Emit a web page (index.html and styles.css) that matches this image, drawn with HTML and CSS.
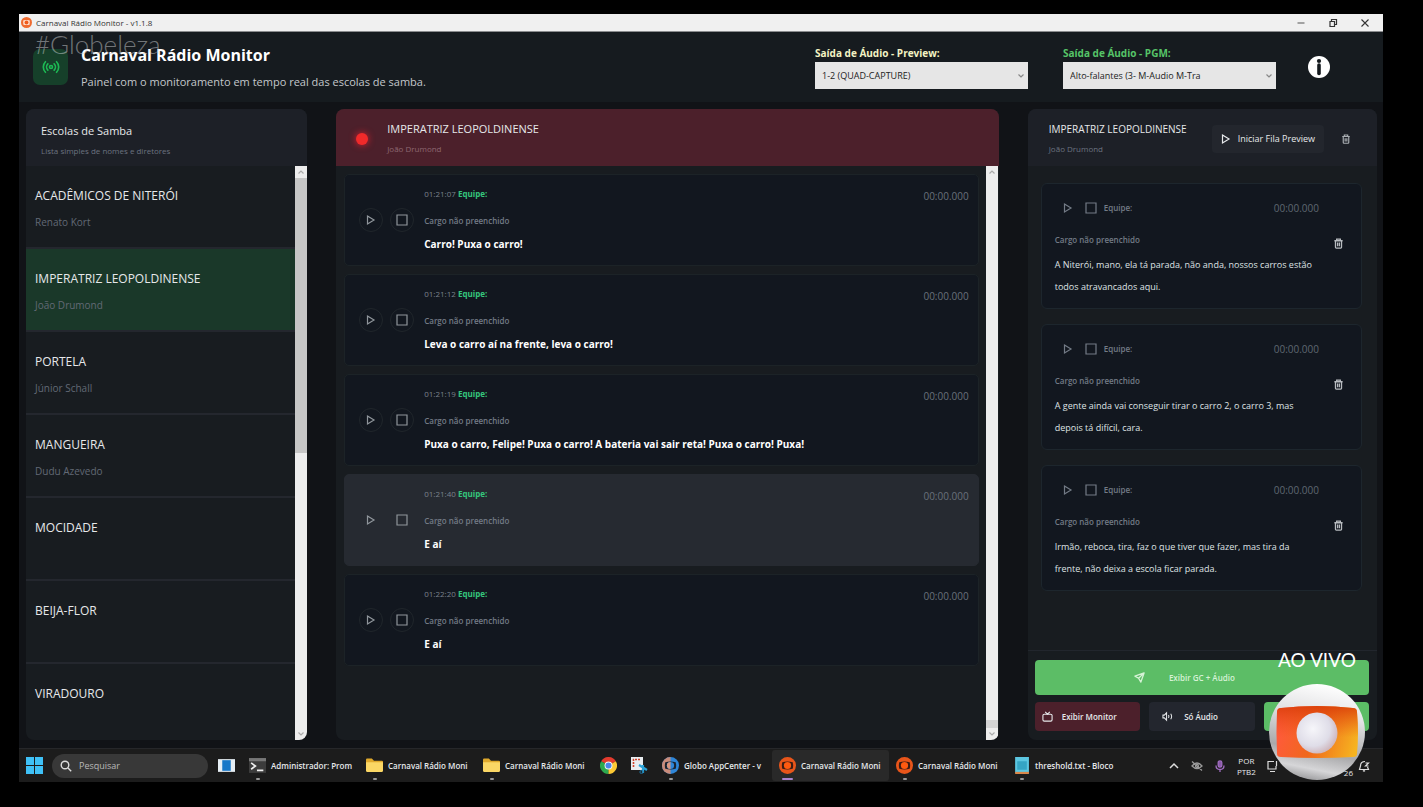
FILE: index.html
```html
<!DOCTYPE html>
<html lang="pt-BR">
<head>
<meta charset="utf-8">
<title>Carnaval Rádio Monitor - v1.1.8</title>
<link rel="stylesheet" href="styles.css">
</head>
<body>
<svg class="defs" aria-hidden="true">
  <defs>
    <symbol id="play" viewBox="0 0 12 12"><path d="M2.5 2 9 6 2.500 10Z" fill="none" stroke="currentColor" stroke-width="1.2"/></symbol>
    <symbol id="stop" viewBox="0 0 12 12"><path d="M1 1h10v10H1Z" fill="none" stroke="currentColor" stroke-width="1.2"/></symbol>
    <symbol id="trash" viewBox="0 0 12 12"><path d="M1.5 3h9M4 3V1.2h4V3M2.7 3v7.2q0 .9.9.9h4.8q.9 0 .9-.9V3M5 5v4M7 5v4" fill="none" stroke="currentColor" stroke-width="1.4"/></symbol>
    <symbol id="up" viewBox="0 0 8 8"><path d="M1.5 5.5 4 3l2.5 2.5" fill="none" stroke="currentColor" stroke-width="1.2"/></symbol>
    <symbol id="down" viewBox="0 0 8 8"><path d="M1.5 2.5 4 5l2.5-2.5" fill="none" stroke="currentColor" stroke-width="1.2"/></symbol>
    <symbol id="folder" viewBox="0 0 16 16"><path d="M0 2.5q0-1 1-1h4.5L7.500 3.500H15q1 0 1 1V7H0Z" fill="#e0a92c"/><path d="M0 5h16v8q0 1-1 1H1q-1 0-1-1Z" fill="#fbd765"/></symbol>
    <symbol id="globo" viewBox="0 0 18 18"><circle cx="9" cy="9" r="9" fill="#e8551a"/><path d="M3.500 5.500Q9 4 14.500 5.500 15.500 9 14.500 12.500 9 14 3.500 12.500 2.500 9 3.500 5.500Z" fill="#3a1c14"/><circle cx="9" cy="9" r="3.800" fill="#ff5a10"/></symbol>
  </defs>
</svg>

<div class="window">
  <div class="titlebar">
    <svg class="titlebar-logo" viewBox="0 0 18 18"><circle cx="9" cy="9" r="9" fill="#ef6a2e"/><path d="M4 5.500Q9 4.500 14 5.500 15 9 14 12.500 9 13.500 4 12.500 3 9 4 5.500Z" fill="#ffe3d4"/><circle cx="9" cy="9" r="3.200" fill="#ef5a1b"/></svg>
    <span class="titlebar-text">Carnaval Rádio Monitor - v1.1.8</span>
    <button class="win-btn" aria-label="Minimizar"><svg viewBox="0 0 10 10"><path d="M1.500 5h7" stroke="#555" fill="none"/></svg></button>
    <button class="win-btn" aria-label="Restaurar"><svg viewBox="0 0 10 10"><path d="M2 3.500h4.500v5H2ZM3.500 3V1.500h5v5H7" stroke="#333" stroke-width="1.200" fill="none"/></svg></button>
    <button class="win-btn" aria-label="Fechar"><svg viewBox="0 0 10 10"><path d="m1.500 1.500 7 7m0-7-7 7" stroke="#333" stroke-width="1.100" fill="none"/></svg></button>
  </div>

  <header class="header">
    <div class="brand-icon"><svg viewBox="0 0 24 24" fill="none" stroke="#1db954" stroke-width="2.200" stroke-linecap="round"><circle cx="12" cy="12" r="2"/><path d="M7.800 7.800a6 6 0 0 0 0 8.400M16.200 7.800a6 6 0 0 1 0 8.400M4.600 5a10 10 0 0 0 0 14M19.400 5a10 10 0 0 1 0 14"/></svg></div>
    <div class="brand">
      <h1>Carnaval Rádio Monitor</h1>
      <p>Painel com o monitoramento em tempo real das escolas de samba.</p>
    </div>
    <div class="field">
      <label class="label-preview" for="out-preview">Saída de Áudio - Preview:</label>
      <div class="select-wrap"><select id="out-preview"><option>1-2 (QUAD-CAPTURE)</option></select><svg class="caret"><use href="#down"/></svg></div>
    </div>
    <div class="field">
      <label class="label-pgm" for="out-pgm">Saída de Áudio - PGM:</label>
      <div class="select-wrap"><select id="out-pgm"><option>Alto-falantes (3- M-Audio M-Tra</option></select><svg class="caret"><use href="#down"/></svg></div>
    </div>
    <button class="info" aria-label="Informações"><svg viewBox="0 0 22 22"><circle cx="11" cy="11" r="11" fill="#fff"/><circle cx="11" cy="5" r="2.100" fill="#14191d"/><path d="M11 9v8.500" stroke="#14191d" stroke-width="3.600" stroke-linecap="round"/></svg></button>
  </header>

  <main class="panels">
    <section class="panel">
      <div class="panel-head schools-head">
        <h2>Escolas de Samba</h2>
        <p>Lista simples de nomes e diretores</p>
      </div>
      <div class="scroll-area">
        <ul class="schools">
          <li><h3>ACADÊMICOS DE NITERÓI</h3><p>Renato Kort</p></li>
          <li class="selected"><h3>IMPERATRIZ LEOPOLDINENSE</h3><p>João Drumond</p></li>
          <li><h3>PORTELA</h3><p>Júnior Schall</p></li>
          <li><h3>MANGUEIRA</h3><p>Dudu Azevedo</p></li>
          <li><h3>MOCIDADE</h3></li>
          <li><h3>BEIJA-FLOR</h3></li>
          <li><h3>VIRADOURO</h3></li>
        </ul>
        <div class="scrollbar"><svg><use href="#up"/></svg><div class="track"><div class="thumb thumb-top"></div></div><svg><use href="#down"/></svg></div>
      </div>
    </section>

    <section class="panel">
      <div class="panel-head live-head">
        <span class="rec"></span>
        <div>
          <h2>IMPERATRIZ LEOPOLDINENSE</h2>
          <p>João Drumond</p>
        </div>
      </div>
      <div class="scroll-area">
        <div class="messages">
          <article class="message">
            <button class="round" aria-label="Reproduzir"><svg><use href="#play"/></svg></button>
            <button class="round" aria-label="Parar"><svg><use href="#stop"/></svg></button>
            <div class="message-body"><p class="meta">01:21:07 <b>Equipe:</b></p><p class="role">Cargo não preenchido</p><p class="text">Carro! Puxa o carro!</p></div>
            <time>00:00.000</time>
          </article>
          <article class="message">
            <button class="round" aria-label="Reproduzir"><svg><use href="#play"/></svg></button>
            <button class="round" aria-label="Parar"><svg><use href="#stop"/></svg></button>
            <div class="message-body"><p class="meta">01:21:12 <b>Equipe:</b></p><p class="role">Cargo não preenchido</p><p class="text">Leva o carro aí na frente, leva o carro!</p></div>
            <time>00:00.000</time>
          </article>
          <article class="message">
            <button class="round" aria-label="Reproduzir"><svg><use href="#play"/></svg></button>
            <button class="round" aria-label="Parar"><svg><use href="#stop"/></svg></button>
            <div class="message-body"><p class="meta">01:21:19 <b>Equipe:</b></p><p class="role">Cargo não preenchido</p><p class="text">Puxa o carro, Felipe! Puxa o carro! A bateria vai sair reta! Puxa o carro! Puxa!</p></div>
            <time>00:00.000</time>
          </article>
          <article class="message active">
            <button class="round" aria-label="Reproduzir"><svg><use href="#play"/></svg></button>
            <button class="round" aria-label="Parar"><svg><use href="#stop"/></svg></button>
            <div class="message-body"><p class="meta">01:21:40 <b>Equipe:</b></p><p class="role">Cargo não preenchido</p><p class="text">E aí</p></div>
            <time>00:00.000</time>
          </article>
          <article class="message">
            <button class="round" aria-label="Reproduzir"><svg><use href="#play"/></svg></button>
            <button class="round" aria-label="Parar"><svg><use href="#stop"/></svg></button>
            <div class="message-body"><p class="meta">01:22:20 <b>Equipe:</b></p><p class="role">Cargo não preenchido</p><p class="text">E aí</p></div>
            <time>00:00.000</time>
          </article>
        </div>
        <div class="scrollbar"><svg><use href="#up"/></svg><div class="track track-end"><div class="thumb thumb-bottom"></div></div><svg><use href="#down"/></svg></div>
      </div>
    </section>

    <section class="panel">
      <div class="panel-head queue-head">
        <div>
          <h2>IMPERATRIZ LEOPOLDINENSE</h2>
          <p>João Drumond</p>
        </div>
        <button class="start"><svg><use href="#play"/></svg>Iniciar Fila Preview</button>
        <button class="icon-btn" aria-label="Limpar fila"><svg><use href="#trash"/></svg></button>
      </div>
      <div class="queue">
        <article class="queued">
          <div class="queued-body">
            <div class="queued-top"><button class="icon-btn" aria-label="Reproduzir"><svg><use href="#play"/></svg></button><button class="icon-btn" aria-label="Parar"><svg><use href="#stop"/></svg></button><b>Equipe:</b><time>00:00.000</time></div>
            <p class="role">Cargo não preenchido</p>
            <p class="text">A Niterói, mano, ela tá parada, não anda, nossos carros estão<br>todos atravancados aqui.</p>
          </div>
          <button class="icon-btn remove" aria-label="Remover"><svg><use href="#trash"/></svg></button>
        </article>
        <article class="queued">
          <div class="queued-body">
            <div class="queued-top"><button class="icon-btn" aria-label="Reproduzir"><svg><use href="#play"/></svg></button><button class="icon-btn" aria-label="Parar"><svg><use href="#stop"/></svg></button><b>Equipe:</b><time>00:00.000</time></div>
            <p class="role">Cargo não preenchido</p>
            <p class="text">A gente ainda vai conseguir tirar o carro 2, o carro 3, mas<br>depois tá difícil, cara.</p>
          </div>
          <button class="icon-btn remove" aria-label="Remover"><svg><use href="#trash"/></svg></button>
        </article>
        <article class="queued">
          <div class="queued-body">
            <div class="queued-top"><button class="icon-btn" aria-label="Reproduzir"><svg><use href="#play"/></svg></button><button class="icon-btn" aria-label="Parar"><svg><use href="#stop"/></svg></button><b>Equipe:</b><time>00:00.000</time></div>
            <p class="role">Cargo não preenchido</p>
            <p class="text">Irmão, reboca, tira, faz o que tiver que fazer, mas tira da<br>frente, não deixa a escola ficar parada.</p>
          </div>
          <button class="icon-btn remove" aria-label="Remover"><svg><use href="#trash"/></svg></button>
        </article>
      </div>
      <div class="actions">
        <button class="action action-main"><svg viewBox="0 0 12 12" fill="none" stroke="currentColor" stroke-width="1.400" stroke-linejoin="round"><path d="M11 1 1 4.500l4 2.300L7.500 11ZM11 1 5 6.800"/></svg>Exibir GC + Áudio</button>
        <button class="action action-red"><svg viewBox="0 0 12 12" fill="none" stroke="currentColor" stroke-width="1.200"><rect x="1" y="3.500" width="10" height="7.500" rx="1.500"/><path d="M3.500 1 6 3.500 8.500 1"/></svg>Exibir Monitor</button>
        <button class="action action-dark"><svg viewBox="0 0 12 12" fill="none" stroke="currentColor" stroke-width="1.100"><path d="M1 4.500h1.500L5 2v8L2.500 7.500H1ZM7 4.500q1 1.500 0 3M9.500 3q2 3 0 6"/></svg>Só Áudio</button>
        <button class="action action-green" aria-label="Exibir GC"></button>
      </div>
    </section>
  </main>

  <footer class="taskbar">
    <button class="start-menu" aria-label="Iniciar"><svg viewBox="0 0 17 17" fill="#3fc1f7"><path d="M0 0h8v8H0ZM9 0h8v8H9ZM0 9h8v8H0ZM9 9h8v8H9Z"/></svg></button>
    <label class="search"><svg viewBox="0 0 12 12" fill="none" stroke="#ddd" stroke-width="1.400"><circle cx="5" cy="5" r="3.800"/><path d="m8 8 3.200 3.200"/></svg><input type="text" placeholder="Pesquisar" aria-label="Pesquisar"></label>
    <button class="task-icon" aria-label="Visão de tarefas"><svg viewBox="0 0 16 16"><path d="M0 2h16v12H0Z" fill="#e6eef4"/><path d="M4 3h8v10H4Z" fill="#1677c8"/></svg></button>
    <button class="task running"><svg viewBox="0 0 16 16"><path d="M0 1h16v14H0Z" fill="#3c3c3c"/><path d="M0 1h16v3H0Z" fill="#777"/><path d="m2 5.500 4 3-4 3M7.500 12.500h6" stroke="#eee" stroke-width="1.600" fill="none"/></svg><span>Administrador: Prom</span></button>
    <button class="task running"><svg><use href="#folder"/></svg><span>Carnaval Rádio Moni</span></button>
    <button class="task running"><svg><use href="#folder"/></svg><span>Carnaval Rádio Moni</span></button>
    <button class="task-icon" aria-label="Chrome"><svg viewBox="0 0 18 18"><path d="M9 9 1.200 4.500A9 9 0 0 1 16.800 4.500Z" fill="#e33b2e"/><path d="M9 9 1.200 4.500A9 9 0 0 0 9 18Z" fill="#2da94f"/><path d="M9 9 16.800 4.500A9 9 0 0 1 9 18Z" fill="#fcc934"/><circle cx="9" cy="9" r="4.200" fill="#f4f4f4"/><circle cx="9" cy="9" r="3.200" fill="#4a85e8"/></svg></button>
    <button class="task-icon" aria-label="Captura"><svg viewBox="0 0 17 17"><path d="M0 0h12v13H0Z" fill="#e9edf0"/><path d="M2.500 10V2.500H9.500" stroke="#d0432c" stroke-width="1.600" stroke-dasharray="2 1" fill="none"/><path d="m8 8 8 5M12 16V8" stroke="#2ba3d8" stroke-width="2.200" fill="none"/><circle cx="10.500" cy="15" r="1.600" fill="none" stroke="#1d6f9c"/></svg></button>
    <button class="task running"><svg viewBox="0 0 18 18"><circle cx="9" cy="9" r="9" fill="#2e86d8"/><path d="M9 0a9 9 0 0 0 0 18Z" fill="#c98b7a"/><path d="M3.500 5.500Q9 4 14.500 5.500 15.500 9 14.500 12.500 9 14 3.500 12.500 2.500 9 3.500 5.500Z" fill="#1b2430"/><circle cx="9" cy="9" r="3.800" fill="#2e86d8"/><path d="M9 5.200a3.800 3.800 0 0 0 0 7.600Z" fill="#d99680"/></svg><span>Globo AppCenter - v</span></button>
    <button class="task running current"><svg><use href="#globo"/></svg><span>Carnaval Rádio Moni</span></button>
    <button class="task running"><svg><use href="#globo"/></svg><span>Carnaval Rádio Moni</span></button>
    <button class="task running"><svg viewBox="0 0 16 16"><path d="M2 0h13v15H2Z" fill="#5cc6e0"/><path d="M4 4h9v8H4Z" fill="#35a5c4"/><path d="M2 14h13v2H2Z" fill="#d9874a"/></svg><span>threshold.txt - Bloco</span></button>
    <div class="tray">
      <svg viewBox="0 0 12 12" fill="none" stroke="#ddd" stroke-width="1.500"><path d="m2 8 4-4 4 4"/></svg>
      <svg viewBox="0 0 12 12" fill="none" stroke="#999" stroke-width="1.300"><path d="M1 6q5-6 10 0-5 5-10 0ZM1 1.500l10 9"/><circle cx="6" cy="6" r="1.500"/></svg>
      <svg viewBox="0 0 12 12" fill="none" stroke="#a06cc0" stroke-width="1.300"><rect x="4.200" y=".8" width="3.600" height="6.400" rx="1.800" fill="#8a5aa8"/><path d="M2 5.500q0 4 4 4t4-4M6 9.500V12"/></svg>
      <span class="lang">POR<br>PTB2</span>
      <svg viewBox="0 0 12 12" fill="none" stroke="#ddd" stroke-width="1.200"><path d="M7 1.500H1v7.500h8V6M3 11.500h5M9.500 1v5"/></svg>
    </div>
    <span class="date">26</span>
    <svg class="bell" viewBox="0 0 12 12" fill="none" stroke="#ddd" stroke-width="1.200"><path d="M7 1.500Q2.500 1.500 2.500 6L1.500 9.500h9L9.500 7M5 10.500q1 1 2 0M7.500 3H10.500L7.500 6h3"/></svg>
  </footer>
</div>

<div class="hashtag">#Globeleza</div>
<div class="live">
  <span>AO VIVO</span>
  <svg viewBox="0 0 96 96">
    <defs>
      <linearGradient id="shell" x1=".6" y1="0" x2=".4" y2="1"><stop offset="0" stop-color="#fff"/><stop offset=".3" stop-color="#e4e4e6"/><stop offset=".7" stop-color="#a9a9ab"/><stop offset=".88" stop-color="#d6d6d8"/><stop offset="1" stop-color="#9c9c9e"/></linearGradient>
      <linearGradient id="screen" x1="0" y1=".5" x2="1" y2=".7"><stop offset="0" stop-color="#ff5a3c"/><stop offset=".45" stop-color="#f0681c"/><stop offset="1" stop-color="#f6b420"/></linearGradient>
      <linearGradient id="shade" x1="0" y1="0" x2="0" y2="1"><stop offset="0" stop-color="#d83c08" stop-opacity=".85"/><stop offset=".6" stop-color="#e85010" stop-opacity="0"/></linearGradient>
      <radialGradient id="ball" cx=".4" cy=".4" r=".7"><stop offset="0" stop-color="#f6f6fa"/><stop offset=".6" stop-color="#dfdde8"/><stop offset="1" stop-color="#c9a9ae"/></radialGradient>
    </defs>
    <circle cx="48" cy="48" r="48" fill="url(#shell)"/>
    <path d="M12 24Q48 20 84 24 88 24 88 28 90 49 88 70 88 73 84 73 48 75 12 73 8 73 8 70 7 49 8 28 8 24 12 24Z" fill="url(#screen)"/>
    <path d="M12 24Q48 20 84 24 88 24 88 28 90 49 88 70 88 73 84 73 48 75 12 73 8 73 8 70 7 49 8 28 8 24 12 24Z" fill="url(#shade)"/>
    <circle cx="48" cy="49" r="20.500" fill="url(#ball)"/>
  </svg>
</div>
</body>
</html>
```
FILE: styles.css
```css
* { box-sizing: border-box; margin: 0; padding: 0; }
body {
  display: flex;
  min-height: 100vh;
  padding: 14px 40px 25px 19px;
  background: #000;
  color: #e6e8ea;
  font-family: "Open Sans", "Noto Sans", sans-serif;
  font-size: 9px;
}
button, input, select { font: inherit; color: inherit; border: 0; background: none; }
ul { list-style: none; }
h1, h2, h3 { font-weight: 400; }
svg { display: block; flex: none; width: 12px; height: 12px; }
.defs { position: absolute; width: 0; height: 0; }

.window { flex: 1; min-width: 0; display: flex; flex-direction: column; background: #111317; }

.titlebar { display: flex; align-items: center; height: 18px; padding: 0 2px; background: #f0f0f0; border-bottom: 1px solid #8a8c8e; color: #333; }
.titlebar-logo { width: 11px; height: 11px; }
.titlebar-text { flex: 1; padding-left: 4px; font-size: 8px; }
.win-btn { display: grid; place-items: center; width: 32px; height: 16px; }
.win-btn svg { width: 10px; height: 10px; }

.header { display: flex; align-items: center; height: 70px; padding: 0 53px 0 14px; background: #161b1f; }
.brand-icon { display: grid; place-items: center; width: 35px; height: 36px; margin-right: 13px; border-radius: 7px; background: #16402a; }
.brand-icon svg { width: 18px; height: 18px; }
.brand { flex: 1; padding-top: 2px; }
.brand h1 { font-size: 16px; line-height: 24px; font-weight: 700; color: #fff; }
.brand p { padding-top: 4px; font-size: 11px; line-height: 22px; color: #c4c8cb; }
.field { width: 213px; font-size: 10px; }
.field + .field { margin-left: 35px; }
.field label { display: block; font-weight: 700; line-height: 16px; padding-bottom: 1px; }
.label-preview { color: #f3f3c4; }
.label-pgm { color: #56c568; }
.select-wrap { position: relative; }
.select-wrap select { appearance: none; display: block; width: 100%; height: 27px; padding: 0 7px; background: #e6e6e6; color: #222; font-size: 9px; }
.caret { position: absolute; right: 3px; top: 10px; width: 8px; height: 8px; color: #888; }
.info { margin-left: 32px; }
.info svg { width: 22px; height: 22px; }

.panels { flex: 1; display: grid; grid-template-columns: 281fr 662fr 349fr; column-gap: 29px; padding: 7px 6px 8px 7px; }
.panel { display: flex; flex-direction: column; min-width: 0; background: #181c20; border-radius: 8px; overflow: hidden; }
.panel-head { height: 57px; background: #1d2027; }
.panel-head h2 { font-size: 11px; line-height: 16px; }
.panel-head p { padding-top: 5px; font-size: 8px; line-height: 14px; color: #6c7380; }
.schools-head { padding: 14px 15px; }
.live-head { display: flex; align-items: center; gap: 19px; padding: 2px 20px 0; background: #4c202b; }
.live-head p { color: #8d6771; }
.rec { width: 12px; height: 12px; border-radius: 50%; background: #f02a2a; box-shadow: 0 0 7px #e02030; }
.queue-head { display: flex; align-items: center; padding: 2px 25px 0 21px; }
.queue-head > div { flex: 1; }
.queue-head h2 { font-size: 10px; }
.start { display: flex; align-items: center; gap: 6px; height: 28px; margin-right: 16px; padding: 0 9px 0 8px; border-radius: 4px; background: #23262d; }
.icon-btn { display: grid; place-items: center; width: 12px; height: 12px; }
.queue-head .icon-btn { color: #a9adb2; }
.queue-head .icon-btn svg { width: 10px; height: 10px; }

.scroll-area { flex: 1; display: flex; min-height: 0; }
.schools { flex: 1; }
.schools li { height: 83px; padding: 20px 9px 0; border-bottom: 2px solid #24272e; }
.schools li:last-child { border-bottom: 0; height: auto; }
.schools .selected { background: #1a3829; }
.schools h3 { font-size: 12px; line-height: 20px; }
.schools p { padding-top: 6px; font-size: 10px; line-height: 20px; color: #626975; }
.scrollbar { display: flex; flex-direction: column; align-items: center; width: 12px; margin-right: 1px; background: #ededed; color: #aaa; }
.panel:first-child .scrollbar { margin-right: 0; }
.scrollbar svg { margin: 2px 0; width: 8px; height: 8px; }
.track { flex: 1; width: 100%; display: flex; flex-direction: column; }
.track-end { justify-content: flex-end; }
.thumb { background: #c6c6c6; }
.thumb-top { height: 50%; }
.thumb-bottom { height: 8px; background: #d4d4d4; }

.messages { flex: 1; display: flex; flex-direction: column; gap: 8px; padding: 8px 7px 8px 8px; }
.message { display: flex; align-items: center; height: 92px; padding: 0 9px 0 14px; border: 1px solid #1c2327; border-radius: 5px; background: #12171f; }
.round { display: grid; place-items: center; width: 24px; height: 24px; margin-right: 7px; border: 1px solid #20262b; border-radius: 50%; color: #8f959b; }
.message-body { flex: 1; padding: 0 0 2px 3px; }
.meta { line-height: 16px; font-size: 8px; color: #7b828c; }
.meta b { color: #35c67c; }
.role { padding-top: 11px; line-height: 16px; font-size: 8px; font-weight: 600; color: #737b86; }
.message .text { padding-top: 7px; line-height: 16px; font-size: 10px; font-weight: 700; color: #fff; }
.message time { align-self: flex-start; padding-top: 13px; line-height: 16px; font-size: 10px; color: #69717c; }
.message.active { background: #262a31; border-color: #262a31; }
.active .round { border-color: transparent; }

.queue { flex: 1; display: flex; flex-direction: column; gap: 15px; padding: 17px 15px 17px 13px; }
.queued { display: flex; align-items: center; min-height: 126px; padding: 0 17px 0 13px; border: 1px solid #1d262d; border-radius: 6px; background: #12171f; }
.queued-body { flex: 1; min-width: 0; padding-top: 5px; }
.queued-top { display: flex; align-items: center; gap: 11px; padding-left: 7px; line-height: 16px; font-size: 8px; color: #737b86; }
.queued-top b { margin-left: -4px; font-weight: 600; }
.queued-top time { margin-left: auto; padding-right: 13px; font-size: 10px; color: #5f6771; }
.queued .role { padding-top: 16px; }
.queued .text { padding-top: 6px; line-height: 22px; font-size: 9px; color: #dfe2e4; }
.remove { margin-bottom: 6px; color: #b8bcc0; }
.remove svg { width: 11px; height: 11px; }

.actions { display: grid; grid-template-columns: repeat(3, 1fr); gap: 7px 9px; padding: 9px 8px 9px 7px; border-top: 1px solid #22262d; }
.action { display: flex; align-items: center; justify-content: flex-start; gap: 9px; height: 29px; padding: 0 7px; border-radius: 4px; font-size: 8px; font-weight: 600; }
.action svg { width: 11px; height: 11px; }
.action-main { grid-column: 1 / -1; justify-content: center; gap: 24px; height: 35px; padding-right: 42px; background: #5cbd66; color: #d6f2d6; }
.action-red { background: #4c202b; }
.action-dark { gap: 11px; padding-left: 13px; background: #23262e; }
.action-green { background: #5cbd66; }

.taskbar { display: flex; align-items: center; height: 34px; padding: 0 13px 0 7px; background: #1c1c1c; border-top: 1px solid #26272a; }
.start-menu svg { width: 17px; height: 17px; }
.search { display: flex; align-items: center; gap: 7px; width: 156px; height: 24px; margin: 0 3px 0 9px; padding: 0 8px; border-radius: 12px; background: #383838; }
.search input { width: 100px; font-size: 9px; outline: 0; }
.search input::placeholder { color: #b8b8b8; opacity: 1; }
.task-icon { display: grid; place-items: center; width: 31px; height: 32px; }
.task-icon svg { width: 17px; height: 17px; }
.task { position: relative; display: flex; align-items: center; gap: 5px; width: 117px; height: 31px; padding: 0 7px; border-radius: 3px; font-size: 8px; font-weight: 600; }
.task svg { width: 17px; height: 17px; }
.task span { white-space: nowrap; }
.running::after { content: ""; position: absolute; left: 14px; bottom: 1px; width: 4px; height: 2px; border-radius: 1px; background: #999; }
.current { background: #292929; }
.current::after { left: 10px; width: 11px; background: #a884d0; }
.tray { flex: 1; display: flex; align-items: center; justify-content: flex-end; gap: 11px; }
.lang { font-size: 8px; line-height: 11px; text-align: center; }
.date { align-self: flex-end; padding: 0 5px 4px 65px; font-size: 8px; }

.hashtag { position: absolute; left: 35px; top: 29px; font-family: Lato, sans-serif; font-weight: 300; font-size: 26px; line-height: 30px; color: rgba(205, 208, 210, .5); }
.live { position: absolute; right: 58px; bottom: 27px; display: flex; flex-direction: column; align-items: center; gap: 12px; font-family: Lato, sans-serif; font-size: 19px; line-height: 24px; color: #fff; }
.live svg { width: 96px; height: 96px; }
```
